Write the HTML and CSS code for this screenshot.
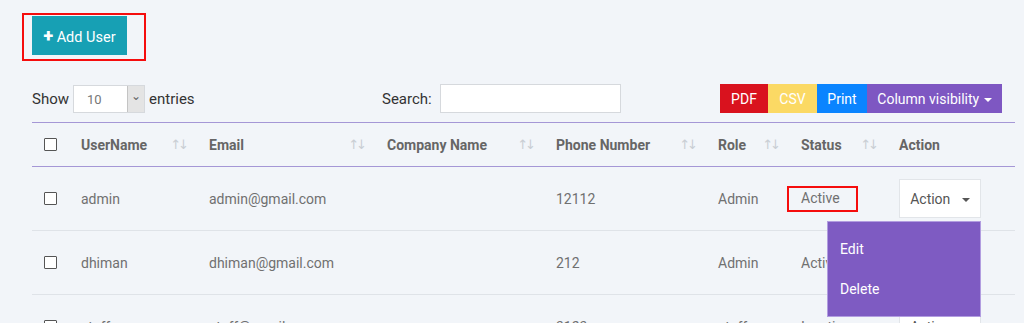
FILE: index.html
```html
<!DOCTYPE html>
<html lang="en">
<head>
    <meta charset="UTF-8" />
    <title>Users</title>
    <link rel="stylesheet" href="styles.css">
</head>
<body>
<div class="page">
    <div class="mark-box">
        <button class="btn-add"><span class="plus">+</span> Add User</button>
    </div>

    <div class="toolbar">
        <label class="length">Show
            <span class="select"><span class="select-val">10</span><span class="select-arrow">&#8964;</span></span>
            entries
        </label>
        <label class="search">Search: <input type="text" /></label>
        <div class="export">
            <button class="pdf">PDF</button>
            <button class="csv">CSV</button>
            <button class="print">Print</button>
            <button class="colvis">Column visibility <span class="caret"></span></button>
        </div>
    </div>

    <table class="users">
        <colgroup>
            <col style="width:37px">
            <col style="width:128px">
            <col style="width:178px">
            <col style="width:169px">
            <col style="width:162px">
            <col style="width:83px">
            <col style="width:98px">
            <col>
        </colgroup>
        <thead>
        <tr>
            <th><span class="check"></span></th>
            <th><div class="th-in">UserName <span class="sort">&#8593;&#8595;</span></div></th>
            <th><div class="th-in">Email <span class="sort">&#8593;&#8595;</span></div></th>
            <th><div class="th-in">Company Name <span class="sort">&#8593;&#8595;</span></div></th>
            <th><div class="th-in">Phone Number <span class="sort">&#8593;&#8595;</span></div></th>
            <th><div class="th-in">Role <span class="sort">&#8593;&#8595;</span></div></th>
            <th><div class="th-in">Status <span class="sort">&#8593;&#8595;</span></div></th>
            <th>Action</th>
        </tr>
        </thead>
        <tbody>
        <tr>
            <td><span class="check"></span></td>
            <td>admin</td>
            <td>admin@gmail.com</td>
            <td></td>
            <td>12112</td>
            <td>Admin</td>
            <td><span class="mark-status">Active</span></td>
            <td>
                <div class="action-wrap">
                    <button class="btn-action">Action <span class="caret dark"></span></button>
                    <div class="menu">
                        <a href="#">Edit</a>
                        <a href="#">Delete</a>
                    </div>
                </div>
            </td>
        </tr>
        <tr>
            <td><span class="check"></span></td>
            <td>dhiman</td>
            <td>dhiman@gmail.com</td>
            <td></td>
            <td>212</td>
            <td>Admin</td>
            <td>Active</td>
            <td><button class="btn-action">Action <span class="caret dark"></span></button></td>
        </tr>
        <tr>
            <td><span class="check"></span></td>
            <td>staff</td>
            <td>staff@gmail.com</td>
            <td></td>
            <td>3123</td>
            <td>staff</td>
            <td>Inactive</td>
            <td><button class="btn-action">Action <span class="caret dark"></span></button></td>
        </tr>
        </tbody>
    </table>
</div>
</body>
</html>
```

FILE: styles.css
```css
body {
  margin: 0;
  background: #f2f5f9;
  font-family: Roboto, "Liberation Sans", sans-serif;
  color: #6c6c6c;
  overflow: hidden;
}

.page {
  padding: 13px 9px 0 32px;
}

button {
  font-family: inherit;
  border: none;
  cursor: pointer;
}

/* red annotation box round the add button */
.mark-box {
  display: inline-block;
  margin-left: -10px;
  border: 2px solid #f50d0d;
  padding: 1px 17px 4px 8px;
}

.btn-add {
  display: block;
  width: 95px;
  height: 39px;
  background: #17a0b4;
  color: #fff;
  font-size: 14.5px;
  padding: 0;
}

.btn-add .plus {
  font-weight: 900;
  font-size: 18px;
}

.toolbar {
  display: flex;
  align-items: center;
  margin-top: 23px;
  height: 29px;
  font-size: 15px;
  color: #333;
}

.length {
  display: flex;
  align-items: center;
  gap: 4px;
  width: 350px;
}

.select {
  display: flex;
  width: 72px;
  height: 28px;
  background: #fff;
  border: 1px solid #d6d9dd;
  box-sizing: border-box;
}

.select-val {
  flex: 1;
  padding: 6px 0 0 13px;
  font-size: 13px;
  color: #777;
}

.select-arrow {
  width: 16px;
  background: #e4e4e4;
  border-left: 1px solid #c4c4c4;
  text-align: center;
  font-size: 12px;
  line-height: 20px;
  color: #666;
}

.search {
  display: flex;
  align-items: center;
  gap: 8px;
}

.search input {
  width: 181px;
  height: 29px;
  box-sizing: border-box;
  border: 1px solid #d6d9dd;
  background: #fff;
}

.export {
  display: flex;
  margin-left: auto;
  margin-right: 13px;
}

.export button {
  height: 29px;
  color: #fff;
  font-size: 14px;
  padding: 0;
  white-space: nowrap;
}

.pdf { background: #d9121e; width: 48px; }
.csv { background: #fbd964; width: 49px; }
.print { background: #0a84ff; width: 50px; }
.colvis { background: #7e57c2; width: 135px; }

.caret {
  display: inline-block;
  vertical-align: middle;
  margin-left: 1px;
  border-left: 4px solid transparent;
  border-right: 4px solid transparent;
  border-top: 4px solid #fff;
}

.caret.dark {
  border-top-color: #555;
  margin-left: 8px;
}

.users {
  width: 983px;
  margin-top: 9px;
  border-collapse: collapse;
  table-layout: fixed;
  font-size: 14px;
}

.users thead th {
  height: 43px;
  border-top: 1px solid #a597d6;
  border-bottom: 1px solid #a597d6;
  text-align: left;
  font-weight: bold;
  color: #666;
  padding: 0 0 0 12px;
}

.th-in {
  display: flex;
  justify-content: space-between;
  align-items: center;
  padding-right: 8px;
}

.sort {
  color: #c9ced4;
  font-weight: normal;
  font-family: "DejaVu Sans", sans-serif;
  font-size: 13px;
  letter-spacing: -3px;
  padding-right: 3px;
}

.users td {
  height: 63px;
  padding: 0 0 0 12px;
  border-bottom: 1px solid #dfe3e8;
  color: #707070;
}

.check {
  display: block;
  width: 11px;
  height: 11px;
  border: 1px solid #555;
  border-radius: 1px;
  background: #fff;
}

.mark-status {
  display: inline-block;
  margin-left: -14px;
  padding: 2px 16px 4px 12px;
  border: 2px solid #f50d0d;
}

.action-wrap {
  position: relative;
  width: 82px;
}

.btn-action {
  width: 82px;
  height: 39px;
  background: #fff;
  border: 1px solid #e2e5e9;
  color: #555;
  font-size: 14px;
}

.menu {
  position: absolute;
  top: 42px;
  right: 0;
  width: 152px;
  padding: 8px 0 7px;
  background: #7e5bc2;
  border: 1px solid #b29de0;
  z-index: 2;
}

.menu a {
  display: block;
  padding: 11px 12px 12px;
  color: #fff;
  text-decoration: none;
  font-size: 14px;
}

.menu a + a {
  padding-top: 12px;
}
```
